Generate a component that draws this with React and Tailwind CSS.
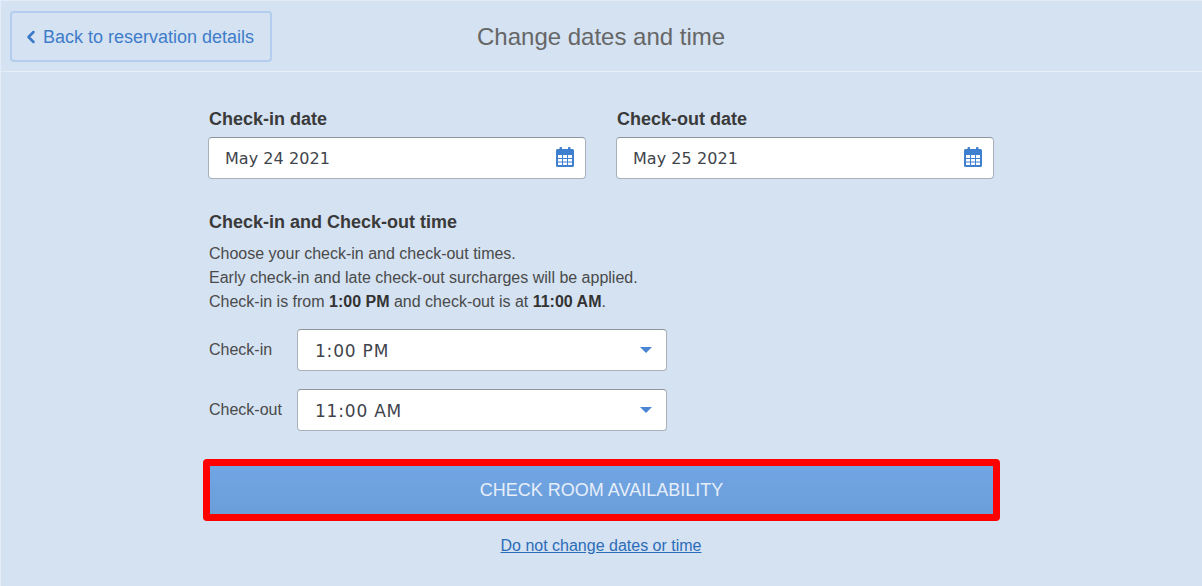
import { ChevronLeft } from 'lucide-react';

const CalendarIcon = () => (
  <svg width="18" height="20" viewBox="0 0 18 20" className="mb-[2px] text-[#3f7fcf]">
    <rect x="3.5" y="0" width="2.5" height="4" rx="1" fill="currentColor" />
    <rect x="12" y="0" width="2.5" height="4" rx="1" fill="currentColor" />
    <path
      fill="currentColor"
      fillRule="evenodd"
      d="M1.5 2H16.5a1.5 1.5 0 0 1 1.5 1.5v15a1.5 1.5 0 0 1-1.5 1.5H1.5A1.5 1.5 0 0 1 0 18.5V3.5A1.5 1.5 0 0 1 1.5 2ZM2 8v3h4V8H2Zm5 0v3h4V8H7Zm5 0v3h4V8h-4ZM2 12v2.5h4V12H2Zm5 0v2.5h4V12H7Zm5 0v2.5h4V12h-4ZM7 15.5V18h4v-2.5H7Zm5 0V18h4v-2.5h-4ZM2 15.5V18h4v-2.5H2Z"
    />
  </svg>
);

const DateField = ({ label, value }) => (
  <div className="w-[378px]">
    <div className="h-[25px] text-[18px] leading-[25px] font-bold text-[#3a3a3a] pl-px pt-px">{label}</div>
    <div className="mt-[6px] h-[42px] flex items-center justify-between bg-white border border-[#a9b1bb] border-t-[#8f959d] rounded-[4px] pl-4 pr-[11px]">
      <span className="pt-[2px] text-[16px] tracking-[0.05px] text-[#3f444c] font-['DejaVu_Sans',sans-serif]">{value}</span>
      <CalendarIcon />
    </div>
  </div>
);

const TimeRow = ({ label, value }) => (
  <div className="flex items-center h-[42px]">
    <div className="w-[89px] pl-px text-[16px] text-[#4a4a4a]">{label}</div>
    <div className="w-[370px] h-[42px] flex items-center justify-between bg-white border border-[#a9b1bb] border-t-[#8f959d] rounded-[4px] pl-[17px] pr-[14px]">
      <span className="pt-[3px] text-[17px] tracking-[0.8px] text-[#3f444c] font-['DejaVu_Sans',sans-serif]">{value}</span>
      <span className="w-0 h-0 border-x-[6px] border-x-transparent border-t-[6px] border-t-[#4a86d4]" />
    </div>
  </div>
);

export default function App() {
  return (
    <div className="w-[1202px] h-[586px] overflow-hidden bg-[#d4e2f2] border-l border-t border-[#e4edf7] font-['Liberation_Sans',Arial,sans-serif]">
      <header className="h-[70px] relative flex items-center border-b border-[#e6eef8] box-content">
        <a className="ml-[9px] w-[262px] h-[51px] flex items-center gap-[2px] pl-[9px] pt-[2px] border-2 border-[#b3cdee] rounded-[4px] text-[18px] text-[#3f7cc9]">
          <ChevronLeft size={20} strokeWidth={3} className="text-[#3b78c8]" />
          Back to reservation details
        </a>
        <h1 className="ml-[205px] pt-[2px] text-[24px] font-normal text-[#666]">Change dates and time</h1>
      </header>

      <main className="w-[786px] ml-[207px] mt-[34px]">
        <div className="flex justify-between">
          <DateField label="Check-in date" value="May 24 2021" />
          <DateField label="Check-out date" value="May 25 2021" />
        </div>

        <h2 className="mt-[31px] pl-px text-[18px] leading-[25px] font-bold text-[#3a3a3a]">Check-in and Check-out time</h2>
        <p className="mt-[7px] pl-px text-[16px] leading-[24px] text-[#4a4a4a]">
          Choose your check-in and check-out times.
          <br />
          Early check-in and late check-out surcharges will be applied.
          <br />
          Check-in is from <b className="text-[#333]">1:00 PM</b> and check-out is at <b className="text-[#333]">11:00 AM</b>.
        </p>

        <div className="mt-[15px] flex flex-col gap-[18px]">
          <TimeRow label="Check-in" value="1:00 PM" />
          <TimeRow label="Check-out" value="11:00 AM" />
        </div>

        <div className="-ml-[5px] mt-[28px] w-[797px] h-[62px] border-[7px] border-[#fe0000] rounded-[4px] bg-gradient-to-b from-[#70a5e4] to-[#6b9ed9] flex items-center justify-center text-[18px] text-[#e6eefa]">
          CHECK ROOM AVAILABILITY
        </div>

        <div className="mt-[13px] text-center text-[16px] text-[#2b6cb8] underline">Do not change dates or time</div>
      </main>
    </div>
  );
}
